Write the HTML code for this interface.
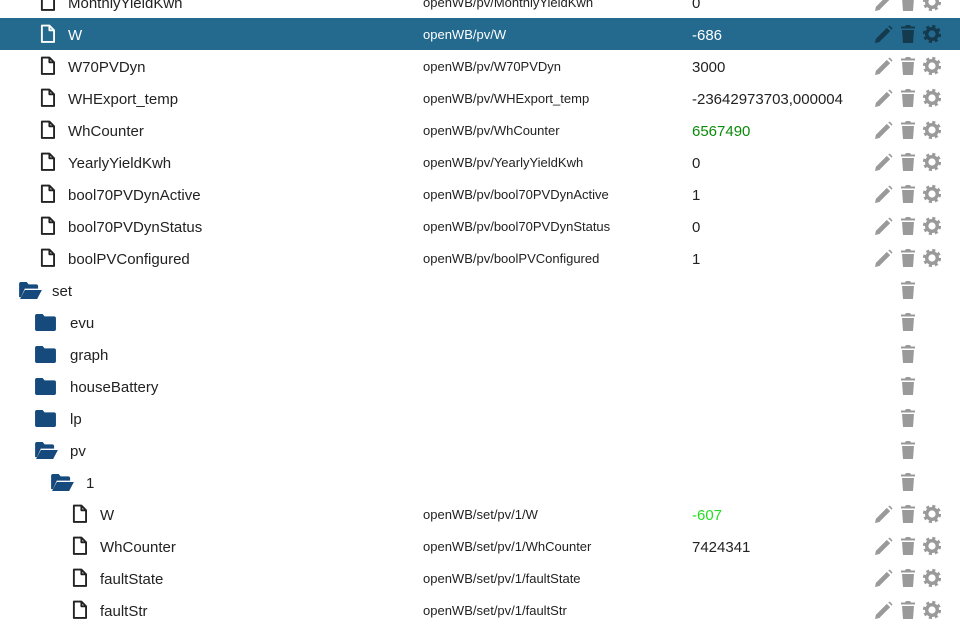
<!DOCTYPE html>
<html><head><meta charset="utf-8"><style>
body{margin:0;width:960px;height:628px;overflow:hidden;background:#fff;font-family:"Liberation Sans",sans-serif;color:#222;position:relative}
.r{position:absolute;left:0;width:960px;height:32px}
.sel{background:#236a8e;color:#fff}
.t{position:absolute;top:9px;font-size:15px;white-space:nowrap}
.p{position:absolute;left:423px;top:9px;font-size:13px;white-space:nowrap}
.v{position:absolute;left:692px;top:9px;font-size:15px}
.ic{position:absolute;top:6px}
</style></head><body>
<svg width="0" height="0" style="position:absolute">
<defs>
<symbol id="file" viewBox="0 0 16 20"><path d="M2 1h8l5 5v12.5h-13z M10 1v5h5" fill="none" stroke="currentColor" stroke-width="2" stroke-linejoin="round"/></symbol>
<symbol id="fc" viewBox="0 0 24 20"><path d="M1 3a2 2 0 0 1 2-2h6l2 2.5h10a2 2 0 0 1 2 2V17a2 2 0 0 1-2 2H3a2 2 0 0 1-2-2z" fill="currentColor"/></symbol>
<symbol id="fo" viewBox="0 0 26 20"><path d="M1 3a2 2 0 0 1 2-2h6l2 2.5h8a2 2 0 0 1 2 2V8H7l-4 9H1z" fill="currentColor"/><path d="M7 9.5h18l-5 9.5H2z" fill="currentColor"/></symbol>
<symbol id="pen" viewBox="0 0 20 20"><path d="M1 19l1-4.5L13.5 3l3.5 3.5L5.5 18z M15 1.5l1.5-1 3 3-1 1.5z" fill="currentColor"/></symbol>
<symbol id="bin" viewBox="0 0 16 20"><path d="M1 2.5h4l1-1.5h4l1 1.5h4v2H1z M2 6h12l-1 13H3z" fill="currentColor"/></symbol>
<symbol id="gear" viewBox="0 0 20 20"><circle cx="10" cy="10" r="5.3" fill="none" stroke="currentColor" stroke-width="3.4"/><circle cx="10" cy="10" r="7.6" fill="none" stroke="currentColor" stroke-width="3" stroke-dasharray="3 2.97"/></symbol>
</defs></svg>
<div id="c"></div>
<script>
var rows=[
["f",40,68,"MonthlyYieldKwh","openWB/pv/MonthlyYieldKwh","0"],
["f",40,68,"W","openWB/pv/W","-686",1],
["f",40,68,"W70PVDyn","openWB/pv/W70PVDyn","3000"],
["f",40,68,"WHExport_temp","openWB/pv/WHExport_temp","-23642973703,000004"],
["f",40,68,"WhCounter","openWB/pv/WhCounter","6567490",0,"#0a8a0a"],
["f",40,68,"YearlyYieldKwh","openWB/pv/YearlyYieldKwh","0"],
["f",40,68,"bool70PVDynActive","openWB/pv/bool70PVDynActive","1"],
["f",40,68,"bool70PVDynStatus","openWB/pv/bool70PVDynStatus","0"],
["f",40,68,"boolPVConfigured","openWB/pv/boolPVConfigured","1"],
["o",18,52,"set"],
["c",34,70,"evu"],["c",34,70,"graph"],["c",34,70,"houseBattery"],["c",34,70,"lp"],
["o",34,70,"pv"],["o",50,86,"1"],
["f",72,100,"W","openWB/set/pv/1/W","-607",0,"#22dd22"],
["f",72,100,"WhCounter","openWB/set/pv/1/WhCounter","7424341"],
["f",72,100,"faultState","openWB/set/pv/1/faultState",""],
["f",72,100,"faultStr","openWB/set/pv/1/faultStr",""]];
var h="";
rows.forEach(function(r,i){
var top=-14+32*i,sel=r[6],ig=sel?"#15394d":"#9a9a9a";
h+='<div class="r'+(sel?' sel':'')+'" style="top:'+top+'px">';
if(r[0]=="f"){
h+='<svg class="ic" style="left:'+r[1]+'px;color:'+(sel?'#fff':'#222')+'" width="15" height="20"><use href="#file"/></svg>';
h+='<div class="t" style="left:'+r[2]+'px">'+r[3]+'</div><div class="p">'+r[4]+'</div><div class="v" style="color:'+(r[7]||'inherit')+'">'+r[5]+'</div>';
h+='<svg class="ic" style="left:874px;top:7px;color:'+ig+'" width="19" height="19"><use href="#pen"/></svg>';
}else{
h+='<svg class="ic" style="left:'+r[1]+'px;top:7px;color:#174a7c" width="'+(r[0]=="o"?25:23)+'" height="19"><use href="#'+(r[0]=="o"?"fo":"fc")+'"/></svg>';
h+='<div class="t" style="left:'+r[2]+'px">'+r[3]+'</div>';
}
h+='<svg class="ic" style="left:900px;top:6px;color:'+ig+'" width="16" height="20"><use href="#bin"/></svg>';
if(r[0]=="f")h+='<svg class="ic" style="left:922px;top:6px;color:'+ig+'" width="20" height="20"><use href="#gear"/></svg>';
h+='</div>';});
document.getElementById("c").innerHTML=h;
</script>
</body></html>
